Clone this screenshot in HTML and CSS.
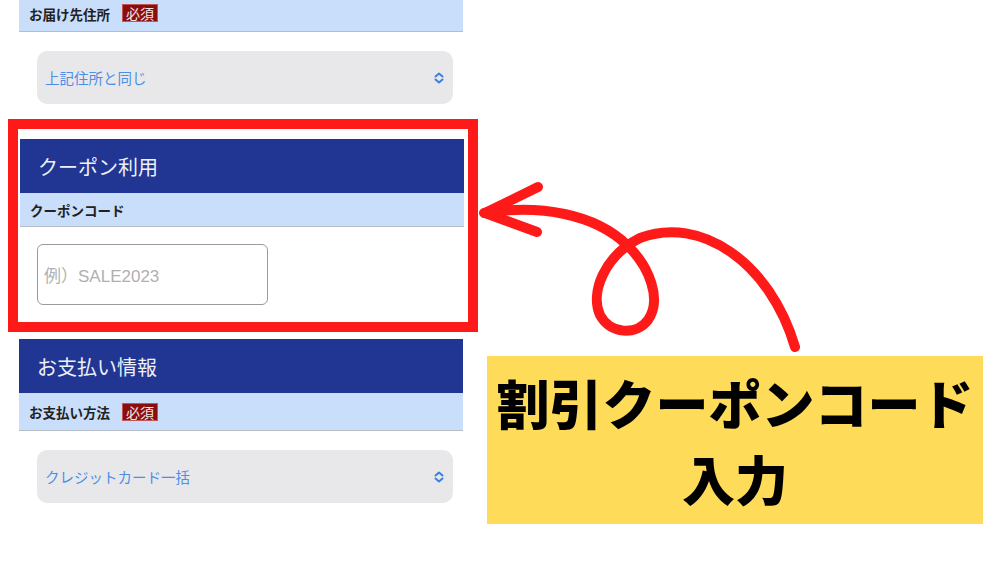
FILE: index.html
```html
<!DOCTYPE html>
<html lang="ja">
<head>
  <meta charset="utf-8">
  <title>クーポン利用</title>
  <link rel="stylesheet" href="styles.css">
</head>
<body>
  <div class="page">
    <div class="form">
      <div class="label-bar top-bar">
        <span class="label">お届け先住所</span>
        <span class="badge">必須</span>
      </div>
      <div class="select">
        <span>上記住所と同じ</span>
        <svg class="chev" width="10" height="12" viewBox="0 0 10 12">
          <path d="M1.5 4.5 L5 1.5 L8.5 4.5 M1.5 7.5 L5 10.5 L8.5 7.5" fill="none" stroke="#3b7fe3" stroke-width="2" stroke-linecap="round" stroke-linejoin="round"/>
        </svg>
      </div>

      <div class="frame">
        <div class="section-head">クーポン利用</div>
        <div class="label-bar coupon-bar">
          <span class="label">クーポンコード</span>
        </div>
        <div class="input-row">
          <div class="input">例）SALE2023</div>
        </div>
      </div>

      <div class="section-head pay-head">お支払い情報</div>
      <div class="label-bar pay-bar">
        <span class="label">お支払い方法</span>
        <span class="badge">必須</span>
      </div>
      <div class="select">
        <span>クレジットカード一括</span>
        <svg class="chev" width="10" height="12" viewBox="0 0 10 12">
          <path d="M1.5 4.5 L5 1.5 L8.5 4.5 M1.5 7.5 L5 10.5 L8.5 7.5" fill="none" stroke="#3b7fe3" stroke-width="2" stroke-linecap="round" stroke-linejoin="round"/>
        </svg>
      </div>
    </div>

    <div class="side">
      <div class="note">割引クーポンコード<br>入力</div>
    </div>
  </div>

  <svg class="arrow" width="1000" height="563" viewBox="0 0 1000 563">
    <g fill="none" stroke="#ff1a1a" stroke-width="10" stroke-linecap="round" stroke-linejoin="round">
      <path d="M484,213 C540,204 595,214 627,245 C650,267 662,300 648,320 C636,336 610,334 600,315 C590,293 604,256 640,238 C700,215 770,262 795,347"/>
      <path d="M538,187 L485,213 L537,232"/>
    </g>
  </svg>
</body>
</html>
```

FILE: styles.css
```css
body {
  margin: 0;
  background: #fff;
  font-family: "Noto Sans CJK JP", "Noto Sans", sans-serif;
  width: 1000px;
  height: 563px;
  overflow: hidden;
  position: relative;
}

.page {
  display: flex;
}

.form {
  width: 444px;
  margin-left: 19px;
  display: flex;
  flex-direction: column;
}

.label-bar {
  background: #c9defa;
  border-bottom: 1px solid #b8bcc4;
  display: flex;
  align-items: center;
  padding-left: 10px;
}

.top-bar {
  height: 31px;
  align-items: flex-start;
}

.top-bar .label,
.top-bar .badge {
  margin-top: 4px;
}

.top-bar .label {
  margin-top: 5px;
}

.coupon-bar {
  height: 33px;
}

.pay-bar {
  height: 37px;
}

.label {
  font-size: 13.5px;
  font-weight: bold;
  color: #222;
  line-height: 18px;
}

.badge {
  margin-left: 12px;
  background: #8a0e0e;
  border: 1px solid #c25555;
  color: #f4e6e6;
  font-size: 14px;
  line-height: 16px;
  padding: 0 3px;
}

.select {
  margin: 19px 10px 0 18px;
  height: 53px;
  border-radius: 10px;
  background: #e8e8eb;
  display: flex;
  align-items: center;
  justify-content: space-between;
  padding: 0 9px 0 8px;
  color: #4a8fe7;
  font-size: 14.5px;
}

.chev {
  display: block;
}

.frame {
  margin: 15px -15px 0 -11px;
  border: 10px solid #ff1a1a;
  padding: 10px 4px 0 2px;
  height: 183px;
}

.section-head {
  background: #213593;
  color: #eef0f8;
  font-size: 20px;
  height: 54px;
  display: flex;
  align-items: center;
  padding-left: 18px;
}

.input-row {
  padding: 17px 0 0 17px;
}

.input {
  width: 223px;
  height: 59px;
  border: 1px solid #9a9a9a;
  border-radius: 6px;
  display: flex;
  align-items: center;
  padding-left: 6px;
  color: #b0b0b0;
  font-size: 17px;
  font-family: "Liberation Sans", "Noto Sans CJK JP", sans-serif;
}

.pay-head {
  margin-top: 7px;
}

.side {
  margin-left: 24px;
  padding-top: 356px;
}

.note {
  width: 496px;
  height: 168px;
  background: #fedc5a;
  display: flex;
  flex-direction: column;
  justify-content: center;
  text-align: center;
  font-size: 53px;
  font-weight: 900;
  line-height: 76px;
  color: #000;
}

.arrow {
  position: absolute;
  left: 0;
  top: 0;
}
```
